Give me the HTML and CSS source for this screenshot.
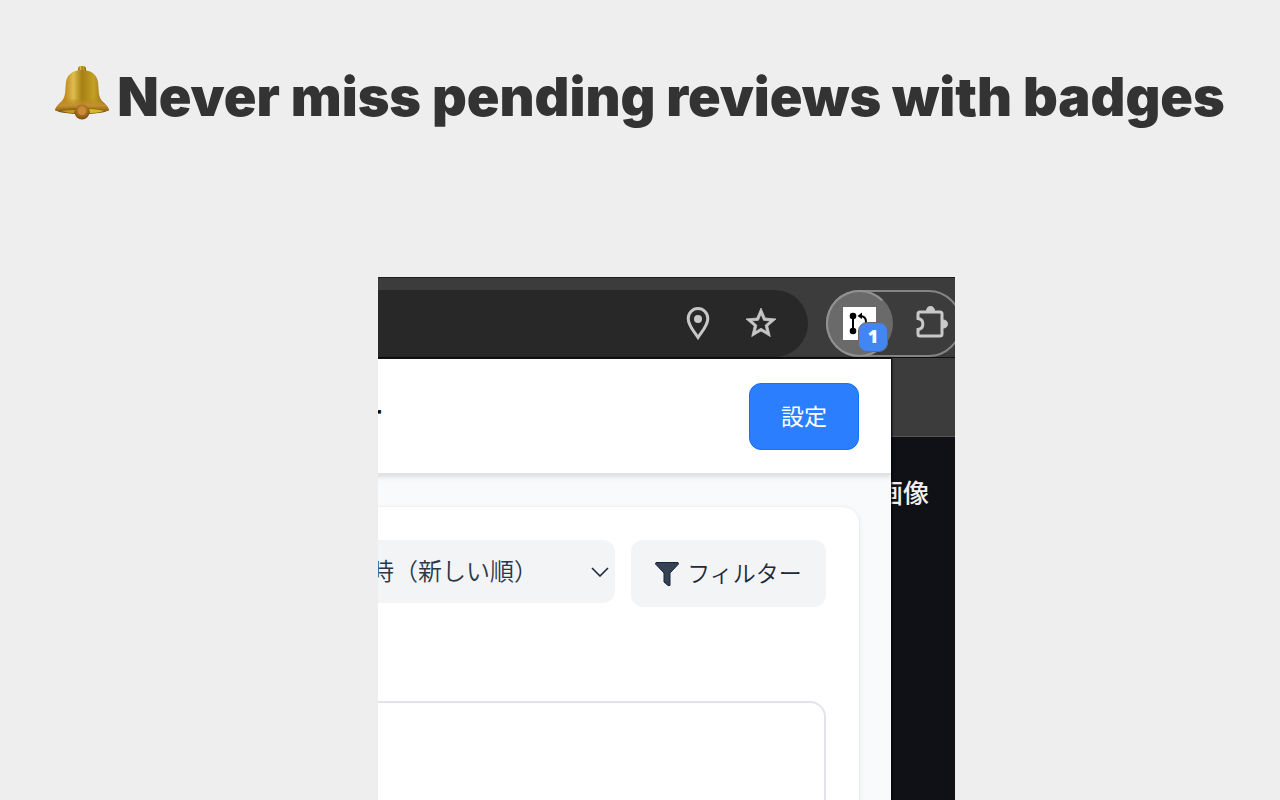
FILE: index.html
```
<!DOCTYPE html>
<html lang="en">
<head>
    <meta charset="UTF-8">
    <meta name="viewport" content="width=device-width, initial-scale=1.0">
    <title>Never miss pending reviews with badges</title>
    <link rel="stylesheet" href="styles.css">
</head>
<body>

    <h1 class="headline">
        <svg class="bell" viewBox="0 0 54 54" aria-hidden="true">
            <defs>
                <linearGradient id="gold" x1="0" x2="1" y1="0" y2="0">
                    <stop offset="0" stop-color="#a8720f"/>
                    <stop offset="0.2" stop-color="#c28f22"/>
                    <stop offset="0.34" stop-color="#e0bd4c"/>
                    <stop offset="0.5" stop-color="#a67f12"/>
                    <stop offset="0.72" stop-color="#c4a024"/>
                    <stop offset="1" stop-color="#7d560e"/>
                </linearGradient>
                <linearGradient id="rim" x1="0" x2="0" y1="0" y2="1">
                    <stop offset="0" stop-color="#b8851c" stop-opacity="0"/>
                    <stop offset="0.6" stop-color="#c39130"/>
                    <stop offset="1" stop-color="#946212"/>
                </linearGradient>
                <radialGradient id="ball" cx="0.5" cy="0.35" r="0.65">
                    <stop offset="0" stop-color="#d89a3c"/>
                    <stop offset="1" stop-color="#7d4c10"/>
                </radialGradient>
            </defs>
            <rect x="23" y="0" width="8" height="7" rx="3" fill="url(#gold)"/>
            <ellipse cx="27" cy="44" rx="26" ry="4" fill="#76500b"/>
            <path d="M27 4C17 4 12 9 11 16C10 24 11 30 7 35C4 38 1 40 0 44C2 47 12 43 27 43C42 43 52 47 54 44C53 40 50 38 47 35C43 30 44 24 43 16C42 9 37 4 27 4Z" fill="url(#gold)"/>
            <path d="M10 31C9 35 2 39 0 44C2 47 12 43 27 43C42 43 52 47 54 44C52 39 45 35 44 31C34 34 20 34 10 31Z" fill="url(#rim)"/>
            <path d="M3 45C12 41 42 41 51 45C43 48 11 48 3 45Z" fill="#8c6810"/>
            <path d="M34 43C41 43 46 44 49 45C46 46 40 47 35 47Z" fill="#d5bb20"/>
            <path d="M7 45C11 44 16 44 20 44L19 47C14 47 10 46 7 45Z" fill="#c59a1f"/>
            <circle cx="27" cy="46" r="7.500" fill="url(#ball)"/>
            <circle cx="27" cy="45" r="4" fill="#c98b35"/>
        </svg>
        <span>Never miss pending reviews with badges</span>
    </h1>

    <main class="stage">
        <div class="browser">
            <div class="toolbar">
                <div class="address-bar">
                    <button class="icon-button" aria-label="Location">
                        <svg width="36" height="36" viewBox="0 0 36 36">
                            <path d="M18 31.500C13 24 8.200 19.500 8.200 12.500A9.800 10 0 0 1 27.800 12.500C27.800 19.500 23 24 18 31.500Z" fill="none" stroke="#c7c7c7" stroke-width="3"/>
                            <circle cx="18" cy="13" r="4" fill="#c7c7c7"/>
                        </svg>
                    </button>
                    <button class="icon-button" aria-label="Bookmark">
                        <svg width="36" height="36" viewBox="0 0 24 24">
                            <path fill="#c7c7c7" stroke="#c7c7c7" stroke-width="0.500" transform="translate(0 -0.600)" d="M22 9.240l-7.190-.62L12 2 9.190 8.630 2 9.240l5.460 4.730L5.820 21 12 17.270 18.180 21l-1.630-7.030L22 9.240zM12 15.400l-3.760 2.270 1-4.280-3.320-2.880 4.380-.38L12 6.100l1.710 4.040 4.380.38-3.320 2.880 1 4.280L12 15.400z"/>
                        </svg>
                    </button>
                </div>
                <div class="extensions">
                    <button class="extension" aria-label="Pull requests">
                        <svg width="33" height="33" viewBox="0 0 33 33">
                            <rect width="33" height="33" fill="#fff"/>
                            <path d="M10 9V24M23 24V15Q23 9 17 9" fill="none" stroke="#000" stroke-width="2"/>
                            <path d="M19 5.500L14.500 9L19 12Z"/>
                            <circle cx="10" cy="9" r="3.300"/>
                            <circle cx="10" cy="24" r="3.300"/>
                            <circle cx="23" cy="24" r="3"/>
                        </svg>
                        <span class="badge">1</span>
                    </button>
                    <button class="icon-button" aria-label="Extensions">
                        <svg width="36" height="36" viewBox="0 0 36 36">
                            <path d="M7 6H27Q29 6 29 8V28Q29 30 27 30H7Q5 30 5 28V23.500C11.500 22.500 11.500 13.500 5 12.500V8Q5 6 7 6Z" fill="none" stroke="#c9c9c9" stroke-width="3"/>
                            <path d="M13 5A4.500 5 0 0 1 22 5ZM30 13.500A5 4.500 0 0 1 30 22.500Z" fill="#c9c9c9"/>
                        </svg>
                    </button>
                </div>
            </div>

            <div class="tab-strip"></div>
            <div class="web-page">画像</div>

            <section class="popup">
                <header class="popup-header">
                    <h2>r</h2>
                    <button class="settings">設定</button>
                </header>
                <div class="card">
                    <div class="controls">
                        <div class="sort">
                            <select aria-label="Sort">
                                <option>時（新しい順）</option>
                            </select>
                            <svg class="chevron" width="18" height="10" viewBox="0 0 18 10" aria-hidden="true">
                                <path d="M1 1L9 9L17 1" fill="none" stroke="#1e2939" stroke-width="1.600"/>
                            </svg>
                        </div>
                        <button class="filter">
                            <svg width="24" height="24" viewBox="0 0 24 24" aria-hidden="true">
                                <path d="M1 0.500H23L23.500 2L15 11V23.500H13L9 20V11L0.500 2Z" fill="#364153" stroke="#1a2440" stroke-width="1"/>
                            </svg>
                            <span>フィルター</span>
                        </button>
                    </div>
                    <div class="review-item"></div>
                </div>
            </section>
        </div>
    </main>

</body>
</html>
```
FILE: styles.css
```
* {
    box-sizing: border-box;
}
body {
    display: flex;
    flex-direction: column;
    height: 100vh;
    margin: 0;
    overflow: hidden;
    background-color: #eeeeee;
    font-family: "Noto Sans CJK JP", sans-serif;
}
button, select {
    border: none;
    font-family: inherit;
    cursor: pointer;
}
.headline {
    display: flex;
    justify-content: center;
    align-items: center;
    gap: 8px;
    height: 277px;
    margin: 0;
    padding-bottom: 84px;
    font-family: Inter, sans-serif;
    font-size: 54px;
    font-weight: 860;
    line-height: 64px;
    white-space: nowrap;
    color: #333;
}
.bell {
    width: 54px;
    height: 54px;
    margin-bottom: 8px;
}
.stage {
    display: grid;
    grid-template-columns: 378fr 577fr 325fr;
    flex: 1;
}
.browser {
    position: relative; /* holds the popup */
    grid-column: 2;
    display: flex;
    flex-direction: column;
    overflow: hidden;
    background-color: #3c3c3c;
}

/* Toolbar */
.toolbar {
    display: flex;
    gap: 18px;
    height: 81px;
    padding-top: 12px;
    border-top: 1px solid #1f1f1f;
    border-bottom: 1px solid #111;
}
.address-bar {
    display: flex;
    flex: 1;
    justify-content: flex-end;
    align-items: center;
    gap: 27px;
    padding-right: 29px;
    border-radius: 0 34px 34px 0;
    background-color: #282828;
}
.icon-button {
    display: flex;
    padding: 0;
    background: none;
}
.extensions {
    display: flex;
    align-items: center;
    gap: 20px;
    flex: none;
    width: 136px;
    margin-right: -7px;
    border: 2px solid #858585;
    border-radius: 34px;
}
.extension {
    position: relative;
    display: flex;
    flex: none;
    justify-content: center;
    align-items: center;
    width: 67px;
    height: 67px;
    margin-left: -2px;
    padding: 0;
    border: 2px solid #929292;
    border-right-color: #6a6a6a;
    border-radius: 50%;
    background-color: #6a6a6a;
}
.badge {
    position: absolute;
    right: 3px;
    bottom: 3px;
    width: 30px;
    height: 30px;
    border: 1px solid #6a6a6a;
    border-radius: 9px;
    background-color: #4285f4;
    color: #fff;
    font-family: "Open Sans", sans-serif;
    font-size: 18px;
    font-weight: 800;
    line-height: 26px;
}

/* Page behind the popup */
.tab-strip {
    height: 79px;
    border-bottom: 1px solid #555;
}
.web-page {
    flex: 1;
    padding: 37px 26px;
    background-color: #101116;
    color: #f0f0f0;
    font-size: 26px;
    font-weight: 500;
    line-height: 36px;
    text-align: right;
}

/* Popup */
.popup {
    position: absolute;
    top: 82px;
    bottom: 0;
    left: -16px;
    right: 64px;
    overflow: hidden;
    background-color: #f9fafb;
    box-shadow: 0 0 2px 1px #000;
}
.popup-header {
    display: flex;
    justify-content: space-between;
    align-items: center;
    height: 116px;
    padding: 0 32px 0 8px;
    border-bottom: 2px solid #e0e2e4;
    background-color: #fff;
    box-shadow: 0 2px 5px rgba(0, 0, 0, 0.12);
}
.popup-header h2 {
    margin: 0;
    font-family: Inter, sans-serif;
    font-size: 28px;
    color: #030712;
}
.settings {
    width: 110px;
    height: 67px;
    padding-bottom: 4px;
    border: 1px solid #1470ff;
    border-radius: 12px;
    background-color: #2b7fff;
    color: #fff;
    font-size: 23px;
    font-weight: 400;
}
.card {
    height: 100%;
    margin: 32px 32px 0 0;
    padding: 33px 33px 0 0;
    border-radius: 16px;
    background-color: #fff;
    box-shadow: 0 0 2px rgba(0, 0, 0, 0.08), 0 2px 6px rgba(0, 0, 0, 0.08);
}
.controls {
    display: flex;
    justify-content: space-between;
    align-items: flex-start;
    gap: 16px;
    margin-bottom: 94px;
}
.sort {
    position: relative;
    flex: 1;
}
.sort select {
    appearance: none;
    width: 100%;
    height: 63px;
    padding: 0 32px 4px 8px;
    border-radius: 12px;
    background-color: #f3f4f6;
    color: #2b3648;
    font-size: 24px;
    font-weight: 350;
}
.chevron {
    position: absolute;
    top: 27px;
    right: 6px;
    pointer-events: none;
}
.filter {
    display: flex;
    justify-content: center;
    align-items: center;
    gap: 8px;
    width: 195px;
    height: 67px;
    padding: 0;
    border-radius: 12px;
    background-color: #f3f4f6;
    color: #1e2939;
    font-size: 23px;
    font-weight: 350;
}
.filter span {
    padding-bottom: 4px;
}
.review-item {
    height: 100%;
    border: 2px solid #e2e4e9;
    border-radius: 16px;
}
```
